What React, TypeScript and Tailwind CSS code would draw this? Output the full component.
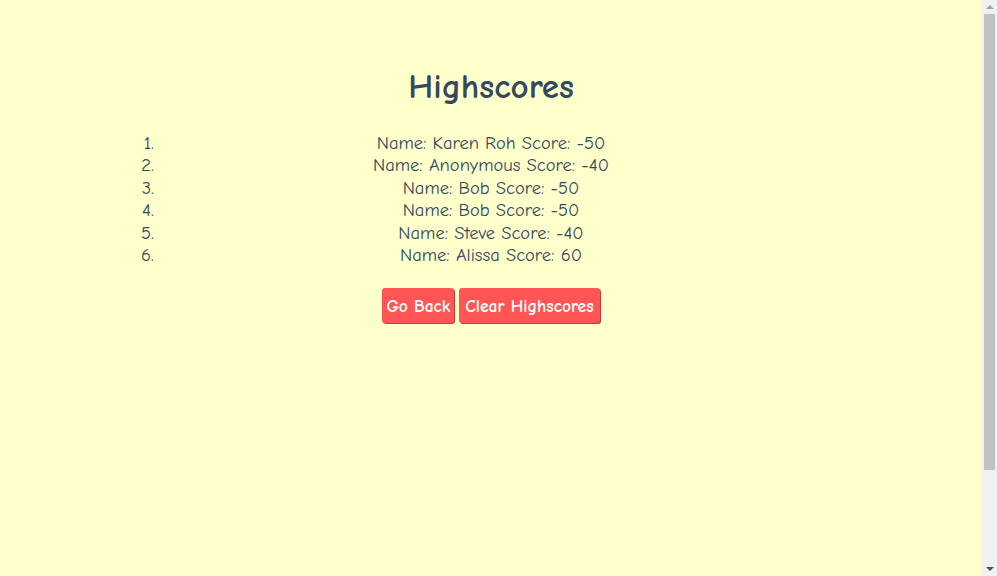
const SCORES = [
  { name: "Karen Roh", score: -50 },
  { name: "Anonymous", score: -40 },
  { name: "Bob", score: -50 },
  { name: "Bob", score: -50 },
  { name: "Steve", score: -40 },
  { name: "Alissa", score: 60 },
];

function Scrollbar() {
  return (
    <div className="flex w-[15px] shrink-0 flex-col items-center bg-[#f1f1f1]">
      <div className="flex h-[14px] items-center justify-center">
        <div className="h-0 w-0 border-x-[4px] border-b-[4px] border-x-transparent border-b-[#a3a3a3]" />
      </div>
      <div className="h-[456px] w-[11px] bg-[#c1c1c1]" />
      <div className="flex-1" />
      <div className="flex h-[14px] items-center justify-center">
        <div className="h-0 w-0 border-x-[4px] border-t-[4px] border-x-transparent border-t-[#505050]" />
      </div>
    </div>
  );
}

export default function App() {
  return (
    <div className="flex h-[576px] overflow-hidden bg-[#ffffcc] text-[#34495e] font-['Comic_Sans_MS','Comic_Neue',cursive]">
      <div className="flex-1">
        <div className="pt-[62px] text-center">
          <h1 className="text-[35px] leading-[50px] font-bold">Highscores</h1>
        </div>

        {/* Score list */}
        <ol className="mx-auto mt-[20px] w-[742px] list-decimal px-[40px] text-[18.5px] leading-[22.4px]">
          {SCORES.map((s, i) => (
            <li key={i} className="text-center">
              Name: {s.name} Score: {s.score}
            </li>
          ))}
        </ol>

        <div className="mt-[22px] flex justify-center gap-[5px]">
          <button className="h-[35px] rounded-[3px] bg-[#ff5555] px-[4px] text-[17.5px] font-bold text-white shadow-[1px_1px_0_#c43c3c]">
            Go Back
          </button>
          <button className="h-[35px] rounded-[3px] bg-[#ff5555] px-[6px] text-[17.5px] font-bold text-white shadow-[1px_1px_0_#c43c3c]">
            Clear Highscores
          </button>
        </div>
      </div>
      <Scrollbar />
    </div>
  );
}
